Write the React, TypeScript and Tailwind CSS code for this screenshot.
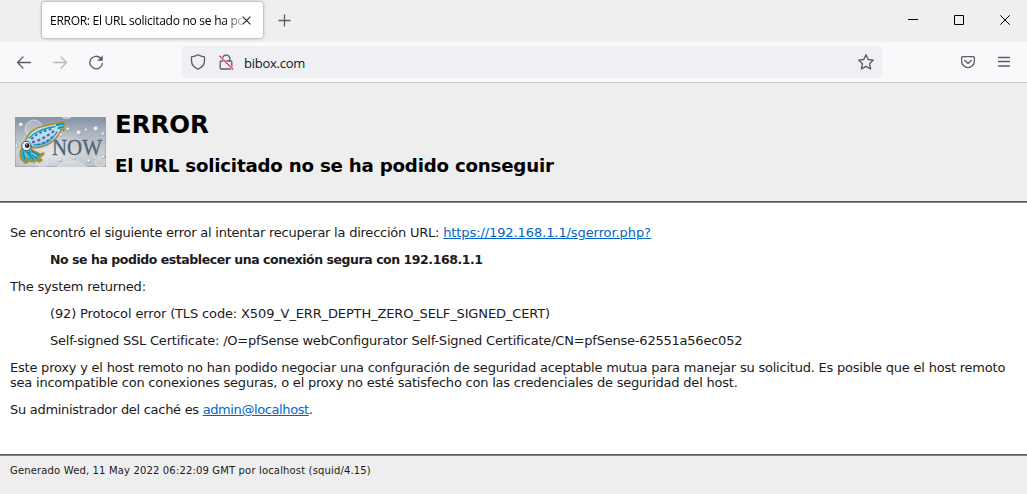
import type { ReactNode } from "react";

function Squid() {
  return (
    <svg width="91" height="50" viewBox="0 0 91 50" className="block">
      <defs>
        <linearGradient id="sky" x1="0" y1="0" x2="0" y2="1">
          <stop offset="0" stopColor="#8391a1" />
          <stop offset="0.3" stopColor="#a9b3bd" />
          <stop offset="0.7" stopColor="#c9cdd1" />
          <stop offset="1" stopColor="#b9bfc4" />
        </linearGradient>
        <radialGradient id="glow" cx="0.4" cy="0.7" r="0.5">
          <stop offset="0" stopColor="#eceef0" stopOpacity="0.85" />
          <stop offset="1" stopColor="#dfe3e6" stopOpacity="0" />
        </radialGradient>
        <radialGradient id="bubble" cx="0.4" cy="0.35" r="0.65">
          <stop offset="0" stopColor="#ffffff" />
          <stop offset="0.45" stopColor="#d9dde1" />
          <stop offset="1" stopColor="#8e99a4" />
        </radialGradient>
        <linearGradient id="mantle" x1="0" y1="0" x2="0.5" y2="1">
          <stop offset="0" stopColor="#35b4cf" />
          <stop offset="0.3" stopColor="#b9e6ee" />
          <stop offset="0.75" stopColor="#a8dfeb" />
          <stop offset="1" stopColor="#2aaac8" />
        </linearGradient>
      </defs>
      <rect width="91" height="50" fill="url(#sky)" />
      <rect width="91" height="50" fill="url(#glow)" />
      <rect x="0.5" y="0.5" width="90" height="49" fill="none" stroke="#8c97a3" strokeOpacity="0.5" />
      <g fill="#e3e6e8" fillOpacity="0.35" stroke="#edf0f2" strokeOpacity="0.6" strokeWidth="1">
        <circle cx="19" cy="12" r="9" />
        <path d="M42 50a17 12 0 0 1 29 0Z" />
        <path d="M47 0a5 3 0 0 0 9 0Z" />
        <circle cx="27" cy="44" r="6" />
        <circle cx="85" cy="45" r="5" />
      </g>
      <g fill="url(#bubble)">
        <circle cx="6" cy="8" r="2.4" />
        <circle cx="53" cy="12" r="1.8" />
        <circle cx="64" cy="16" r="2.8" />
        <circle cx="71" cy="13" r="1.6" />
        <circle cx="81" cy="12" r="2.8" />
        <circle cx="88" cy="17" r="1.7" />
        <circle cx="46" cy="18" r="1.8" />
        <circle cx="2" cy="29" r="1.6" />
        <circle cx="74" cy="44" r="2" />
        <circle cx="80" cy="41" r="1.5" />
        <circle cx="88" cy="40" r="1.8" />
        <circle cx="59" cy="41" r="1.6" />
        <circle cx="45" cy="43" r="2" />
      </g>
      <text
        x="37"
        y="38"
        textLength="50"
        lengthAdjust="spacingAndGlyphs"
        fill="#556474"
        stroke="#556474"
        strokeWidth="0.35"
        className="font-['Liberation_Serif',serif] text-[24px]"
      >
        NOW
      </text>
      <g strokeLinejoin="round" strokeLinecap="round">
        <path
          d="M7 31C4.500 35 4.500 40 7 43l3 3 3-1-2-4c2 3 5 4 9 4l-1-3 5 3 3-2-4-4c3 1 5 0 6-3l-4 1-8-4-1-3Z"
          fill="#2fb0cc"
          stroke="#b98a24"
          strokeWidth="1.6"
        />
        <path d="M8.500 35l1 7M12 35l6 7M17 34l7 4M14 35l8 6" fill="none" stroke="#15829f" strokeWidth="1.1" />
        <path d="M10 36l2 4M16 36l5 3" fill="none" stroke="#9be2ee" strokeWidth="1" />
        <path
          d="M10.500 24C12 17 19 11 29 9c6-1.500 12-2.500 19-3.500l2 2-1.500 1.500.5 4.500-3-1.500-1 3C41 23 36 28 26 30c-4 1-8 1-10 0Z"
          fill="url(#mantle)"
          stroke="#b9842a"
          strokeWidth="1.4"
        />
        <path d="M42 8l6-1M43.500 11l4-1" fill="none" stroke="#168da9" strokeWidth="2" />
        <path d="M14 21c6-6 14-9.500 26-11.500M19 28c11 0 18-5 23-13" fill="none" stroke="#1b93b3" strokeWidth="1.3" />
        <path d="M17 21.500c5-5 11-7.500 20-9.500" fill="none" stroke="#4667ae" strokeWidth="2" strokeDasharray="1 4" />
        <path d="M18 25c8-2 14-6 21-11" fill="none" stroke="#8e4da8" strokeWidth="2.400" strokeDasharray="1 4.500" />
        <path d="M23 27.500c7-1.500 12-5 16-9.500" fill="none" stroke="#465fb3" strokeWidth="1.700" strokeDasharray="1 4" />
        <circle cx="11.400" cy="29" r="4.700" fill="#f2f5f5" stroke="#4a5357" strokeWidth="1" />
        <circle cx="12.200" cy="28.600" r="2.300" fill="#15191c" />
        <circle cx="11.800" cy="28" r="0.7" fill="#fff" />
      </g>
    </svg>
  );
}

function BrowserTabs() {
  return (
    <div className="flex h-[42px] bg-[#efefef]">
      <div className="ml-[42px] mt-0.5 flex h-9 w-[221px] items-center rounded-[3px] bg-white pl-2 shadow-[0_0_3px_rgba(0,0,0,0.5)]">
        <div className="h-5 w-[192px] overflow-hidden whitespace-nowrap bg-linear-to-r from-black from-[174px] to-transparent to-[198px] bg-clip-text font-['Open_Sans',sans-serif] text-[12px] leading-[22px] tracking-[-0.27px] text-transparent">
          ERROR: El URL solicitado no se ha podido
        </div>
        <svg width="9" height="9" viewBox="0 0 9 9" className="block" stroke="#222" strokeWidth="1.1">
          <path d="M.6.6l7.8 7.8M8.4.6L.6 8.4" />
        </svg>
      </div>
      <svg width="13" height="13" viewBox="0 0 13 13" className="ml-[15px] mt-[14px]" stroke="#5b5b66" strokeWidth="1.3">
        <path d="M6.5.5v12M.5 6.5h12" />
      </svg>
      <div className="ml-auto flex pr-[17px] pt-[15px]">
        <svg width="102" height="11" viewBox="0 0 102 11" fill="none" stroke="#000">
          <path d="M0 4.5h10M46.5.5h9v9h-9z" />
          <path d="M92.3.3l9.4 9.4M101.7.3l-9.4 9.4" />
        </svg>
      </div>
    </div>
  );
}

function Toolbar() {
  return (
    <div className="flex h-[41px] items-start border-b border-[#cccccc] bg-[#f9f9fb]">
      <svg width="90" height="16" viewBox="0 0 90 16" className="ml-4 mt-[13px]" fill="none" strokeWidth="1.3" strokeLinecap="round" strokeLinejoin="round">
        <path d="M14.500 7.500H1.500M7 2L1.500 7.500 7 13" stroke="#5b5b66" />
        <path d="M37.500 7.500h13M45 2l5.500 5.500-5.500 5.500" stroke="#b9b9be" />
        <path d="M84.700 3.200A6.300 6.300 0 1 0 86.400 8.300" stroke="#5b5b66" />
        <path d="M86.500 1v4.500h-4.500z" fill="#5b5b66" stroke="#5b5b66" strokeWidth="0.5" />
      </svg>
      <div className="ml-[76px] mt-1 flex h-8 w-[700px] items-center rounded bg-[#f0f0f4]">
        <svg width="48" height="18" viewBox="0 0 48 18" className="ml-2" fill="none" strokeLinejoin="round" strokeLinecap="round">
          <path d="M8 1.800c2 1.200 4 1.800 6.500 2.100v3.700c0 4-2.500 7-6.500 8.500-4-1.500-6.500-4.500-6.500-8.500V3.900C4 3.600 6 3 8 1.800Z" stroke="#5b5b66" strokeWidth="1.3" />
          <path d="M32.500 8V5a3.800 3.800 0 0 1 7.300-.3V8M31.200 8h9.600q1 0 1 1v6q0 1-1 1h-9.600q-1 0-1-1V9q0-1 1-1Z" stroke="#5b5b66" strokeWidth="1.3" />
          <path d="M29.800 3.200l13 13" stroke="#f0f0f4" strokeWidth="2.4" />
          <path d="M29.800 3.200l13 13" stroke="#e22850" strokeWidth="1.2" />
        </svg>
        <span className="ml-[6px] mt-0.5 font-['Open_Sans',sans-serif] text-[13px] leading-4 tracking-[-0.25px] text-[#15141a]">bibox.com</span>
        <svg width="18" height="18" viewBox="0 0 18 18" className="ml-auto mr-[7px]" fill="none" stroke="#5b5b66" strokeWidth="1.35" strokeLinejoin="round">
          <path d="M9 1.700l2.200 4.800 5.200.6-3.900 3.600 1.100 5.300L9 13.300 4.400 16l1.100-5.300-3.900-3.600 5.200-.6Z" />
        </svg>
      </div>
      <svg width="52" height="16" viewBox="0 0 52 16" className="ml-[79px] mt-[12px]" fill="none" stroke="#5b5b66" strokeWidth="1.3" strokeLinecap="round" strokeLinejoin="round">
        <path d="M1.800 2.600h10.400q1.200 0 1.200 1.200v3.500a6.400 6.400 0 0 1-12.800 0V3.800q0-1.200 1.200-1.200ZM3.700 6.400L7 9.400l3.300-3" />
        <path d="M37.500 3.500h11M37.500 7.500h11M37.500 12h11" />
      </svg>
    </div>
  );
}

function Link({ children, className }: { children: ReactNode; className: string }) {
  return (
    <a href="#" className={`text-[#0066cc] underline decoration-1 underline-offset-1 ${className}`}>
      {children}
    </a>
  );
}

export default function App() {
  return (
    <div className="flex h-[494px] w-[1027px] flex-col overflow-hidden bg-white font-['DejaVu_Sans',sans-serif] text-[13px] leading-[15px] text-[#1c1a20]">
      <BrowserTabs />
      <Toolbar />
      <header className="flex h-[119px] shrink-0 items-start border-b border-[#5a5a5a] bg-[#eeeeee] pl-[15px] text-black">
        <div className="mt-[34px] w-[92px]">
          <Squid />
        </div>
        <div className="ml-2 flex flex-col whitespace-nowrap font-bold">
          <h1 className="mt-[27px] text-[24.5px] leading-[30px] tracking-[-0.1px]">ERROR</h1>
          <h2 className="mt-[14px] text-[18.2px] leading-6 tracking-[-0.2px]">El URL solicitado no se ha podido conseguir</h2>
        </div>
      </header>
      <main className="flex h-[253px] shrink-0 flex-col gap-3 whitespace-nowrap border-y border-t-[#808080] border-b-[#5a5a5a] pl-2.5 pt-[22px]">
        <p className="tracking-[-0.232px]">
          Se encontró el siguiente error al intentar recuperar la dirección URL:{" "}
          <Link className="tracking-[-0.09px]">https://192.168.1.1/sgerror.php?</Link>
        </p>
        <p className="ml-10 text-[12.5px] font-bold tracking-[-0.45px]">No se ha podido establecer una conexión segura con 192.168.1.1</p>
        <p className="tracking-[-0.2px]">The system returned:</p>
        <p className="ml-10 tracking-[-0.14px]">(92) Protocol error (TLS code: X509_V_ERR_DEPTH_ZERO_SELF_SIGNED_CERT)</p>
        <p className="ml-10 tracking-[-0.222px]">
          Self-signed SSL Certificate: /O=pfSense webConfigurator Self-Signed Certificate/CN=pfSense-62551a56ec052
        </p>
        <p className="tracking-[-0.215px]">
          <span className="tracking-[-0.22px]">
            Este proxy y el host remoto no han podido negociar una confguración de seguridad aceptable mutua para manejar su solicitud. Es posible que el host remoto
          </span>
          <br />
          sea incompatible con conexiones seguras, o el proxy no esté satisfecho con las credenciales de seguridad del host.
        </p>
        <p className="tracking-[-0.29px]">
          Su administrador del caché es <Link className="tracking-[-0.4px]">admin@localhost</Link>.
        </p>
      </main>
      <footer className="h-[39px] shrink-0 whitespace-nowrap border-t border-[#808080] bg-[#eeeeee] pl-2.5 pt-2 text-[10px] leading-[14px] tracking-[0.155px]">
        Generado Wed, 11 May 2022 06:22:09 GMT por localhost (squid/4.15)
      </footer>
    </div>
  );
}
